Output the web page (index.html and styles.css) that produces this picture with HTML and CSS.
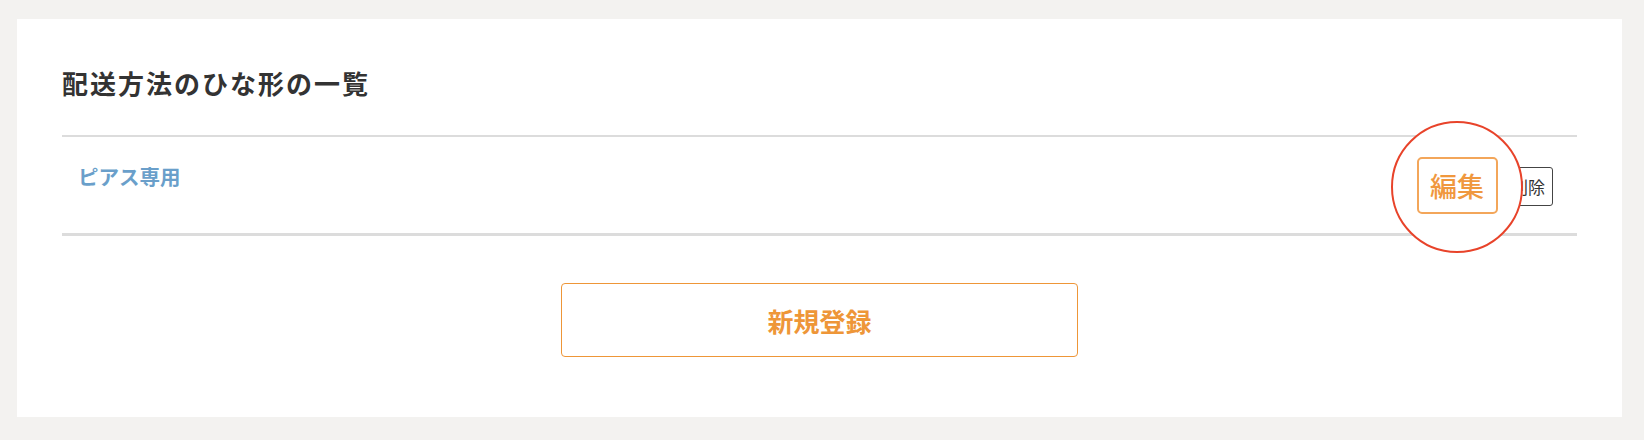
FILE: index.html
```html
<!DOCTYPE html>
<html lang="ja">
<head>
    <meta charset="UTF-8">
    <meta name="viewport" content="width=device-width, initial-scale=1.0">
    <title>配送方法のひな形の一覧</title>
    <link rel="stylesheet" href="styles.css">
</head>
<body>
    <div class="card">
        <h1 class="title">配送方法のひな形の一覧</h1>

        <div class="template-list">
            <div class="template-row">
                <a href="#" class="template-name">ピアス専用</a>
                <div class="row-actions">
                    <button type="button" class="btn-small">削除</button>
                </div>
            </div>
        </div>

        <div class="create-wrap">
            <button type="button" class="btn-create">新規登録</button>
        </div>

        <!-- highlight callout over the edit button -->
        <div class="callout">
            <span class="btn-edit-large">編集</span>
        </div>
    </div>
</body>
</html>
```

FILE: styles.css
```css
body {
    font-family: "Noto Sans CJK JP", "Noto Sans", sans-serif;
    color: #333;
    margin: 0;
    padding: 19px 22px 23px 17px;
    background-color: #f3f2f0;
}
.card {
    position: relative;
    background: white;
    padding: 47px 45px 60px 45px;
}
.title {
    margin: 0 0 35px;
    font-size: 26px;
    line-height: 34px;
    letter-spacing: 2px;
    font-weight: 700;
    color: #333;
}
.template-list {
    border-top: 2px solid #dcdcdc;
    border-bottom: 3px solid #dcdcdc;
}
.template-row {
    display: flex;
    justify-content: space-between;
    align-items: flex-start;
    height: 96px;
    box-sizing: border-box;
    padding: 24px 24px 0 16px;
}
.template-name {
    font-size: 20.5px;
    line-height: 30px;
    font-weight: 700;
    color: #6a9fca;
    text-decoration: none;
}
.row-actions {
    display: flex;
    gap: 6px;
    align-self: center;
    margin-top: -22px;
}
.btn-small {
    font-family: inherit;
    font-size: 17px;
    line-height: 25px;
    padding: 6px 7px;
    color: #333;
    background: white;
    border: 1px solid #444;
    border-radius: 3px;
}
.create-wrap {
    display: flex;
    justify-content: center;
    margin-top: 47px;
}
.btn-create {
    width: 517px;
    height: 74px;
    font-family: inherit;
    font-size: 26px;
    font-weight: 700;
    color: #ee9638;
    background: white;
    border: 1px solid #ee9638;
    border-radius: 4px;
}
.callout {
    position: absolute;
    left: 1374px;
    top: 102px;
    width: 132px;
    height: 132px;
    box-sizing: border-box;
    border: 2.5px solid #e8432a;
    border-radius: 50%;
    background: white;
    display: flex;
    align-items: center;
    justify-content: center;
}
.btn-edit-large {
    display: flex;
    align-items: center;
    justify-content: center;
    width: 81px;
    height: 57px;
    box-sizing: border-box;
    font-size: 27px;
    font-weight: 500;
    color: #f0983e;
    border: 2px solid #f3a65a;
    border-radius: 5px;
    margin-top: -3px;
}
```
